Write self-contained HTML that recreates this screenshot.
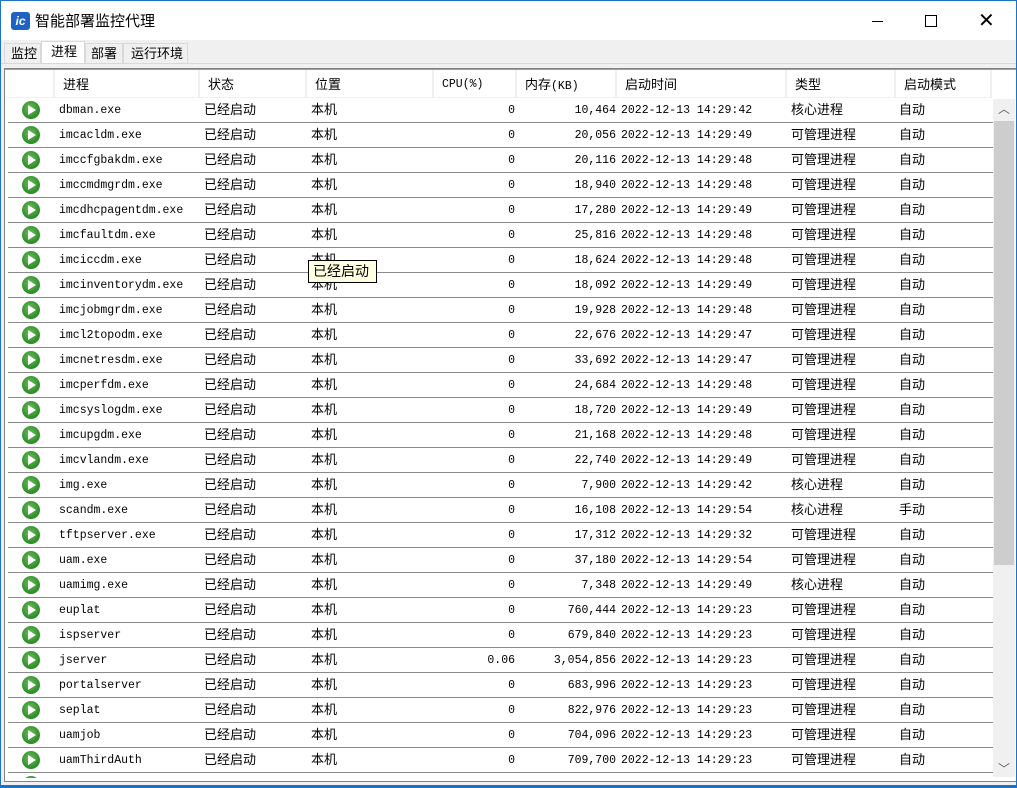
<!DOCTYPE html>
<html><head><meta charset="utf-8"><style>
*{margin:0;padding:0;box-sizing:border-box}
body{width:1017px;height:788px;position:relative;background:#fff;overflow:hidden;font-family:"Liberation Sans","Noto Sans CJK SC",sans-serif;font-size:13px;color:#000}
.a{position:absolute;white-space:nowrap}
.cj{font-family:"Noto Sans CJK SC",sans-serif;font-size:13px}
.m{font-family:"Liberation Mono","Noto Sans CJK SC",monospace;font-size:11.5px}
.r{position:absolute;left:8px;width:985px;height:25px;border-bottom:1px solid #8a8a8a}
.r span{position:absolute;top:2px;line-height:18px;white-space:nowrap}
.r span.m{top:4px}
.ic{position:absolute;left:14px;top:3px;width:18px;height:18px;border-radius:50%;background:radial-gradient(circle at 45% 40%,#6cbd5a,#2f8f2a 65%,#1f6d1c);}
.ic:after{content:"";position:absolute;left:6px;top:4px;border-left:8px solid #fff;border-top:5px solid transparent;border-bottom:5px solid transparent}
.h{position:absolute;top:70px;height:28px;border-right:2px solid #f0f0f0;line-height:28px;padding-left:8px}
</style></head><body>
<div class="a" style="left:0;top:0;width:1017px;height:1px;background:#1a73c8"></div>
<div class="a" style="left:0;top:0;width:1px;height:788px;background:#1a73c8"></div>
<div class="a" style="left:1016px;top:0;width:1px;height:788px;background:#1a73c8"></div>
<div class="a" style="left:11px;top:12px;width:19px;height:18px;background:#1e63c4;border-radius:3px;color:#fff;font-size:12px;font-weight:bold;font-style:italic;line-height:18px;text-align:center;font-family:'Liberation Sans'">ic</div>
<div class="a cj" style="left:35px;top:10px;font-size:15px;line-height:22px">智能部署监控代理</div>
<div class="a" style="left:872px;top:21px;width:11px;height:1px;background:#000"></div>
<div class="a" style="left:925px;top:15px;width:12px;height:12px;border:1px solid #000"></div>
<div class="a" style="left:978px;top:11px;font-size:20px;line-height:20px;font-weight:200">✕</div>
<div class="a" style="left:1px;top:40px;width:1015px;height:746px;background:#f0f0f0"></div>
<div class="a" style="left:4px;top:43px;width:37px;height:20px;border:1px solid #d9d9d9;border-bottom:none"></div>
<div class="a cj" style="left:11px;top:44px;line-height:18px">监控</div>
<div class="a" style="left:41px;top:41px;width:44px;height:23px;background:#fff;border:1px solid #d9d9d9;border-bottom:none"></div>
<div class="a cj" style="left:51px;top:42px;line-height:18px">进程</div>
<div class="a" style="left:85px;top:43px;width:38px;height:20px;border:1px solid #d9d9d9;border-bottom:none"></div>
<div class="a cj" style="left:91px;top:44px;line-height:18px">部署</div>
<div class="a" style="left:123px;top:43px;width:65px;height:20px;border:1px solid #d9d9d9;border-bottom:none"></div>
<div class="a cj" style="left:131px;top:44px;line-height:18px">运行环境</div>
<div class="a" style="left:1px;top:63px;width:1015px;height:1px;background:#d9d9d9"></div>
<div class="a" style="left:4px;top:68px;width:1012px;height:714px;background:#fff;border:1px solid #828282;border-right:none"></div>
<div class="a" style="left:5px;top:69px;width:1011px;height:1px;background:#a0a0a0"></div>
<div class="h" style="left:6px;width:49px"></div>
<div class="h cj" style="left:55px;width:145px;line-height:27px">进程</div>
<div class="h cj" style="left:200px;width:107px;line-height:27px">状态</div>
<div class="h cj" style="left:307px;width:127px;line-height:27px">位置</div>
<div class="h m" style="left:434px;width:83px;padding-top:1px">CPU(%)</div>
<div class="h cj" style="left:517px;width:100px;line-height:27px">内存<span class="m">(KB)</span></div>
<div class="h cj" style="left:617px;width:170px;line-height:27px">启动时间</div>
<div class="h cj" style="left:787px;width:109px;line-height:27px">类型</div>
<div class="h cj" style="left:896px;width:96px;line-height:27px">启动模式</div>
<div class="a" style="left:6px;top:97px;width:986px;height:1px;background:#f0f0f0"></div>
<div class="a" style="left:993px;top:99px;width:22px;height:678px;background:#f0f0f0"></div>
<div class="a" style="left:994px;top:121px;width:20px;height:444px;background:#cdcdcd"></div>
<div class="a" style="left:998px;top:100px;color:#606060;font-size:12px">︿</div>
<div class="a" style="left:998px;top:760px;color:#606060;font-size:12px">﹀</div>
<div class="a" style="left:8px;top:98px;width:985px;height:680px;overflow:hidden">
<div id="rows" style="position:relative;top:-98px"></div>
</div>
<div class="a" style="left:0;top:785px;width:1017px;height:3px;background:#1a73c8"></div>
<div class="a cj" style="left:308px;top:260px;width:69px;height:23px;background:#ffffe1;border:1px solid #000;line-height:21px;padding-left:4px;font-size:14px">已经启动</div>
<script>
var d=[["dbman.exe","0","10,464","42","核心进程","自动"],["imcacldm.exe","0","20,056","49","可管理进程","自动"],["imccfgbakdm.exe","0","20,116","48","可管理进程","自动"],["imccmdmgrdm.exe","0","18,940","48","可管理进程","自动"],["imcdhcpagentdm.exe","0","17,280","49","可管理进程","自动"],["imcfaultdm.exe","0","25,816","48","可管理进程","自动"],["imciccdm.exe","0","18,624","48","可管理进程","自动"],["imcinventorydm.exe","0","18,092","49","可管理进程","自动"],["imcjobmgrdm.exe","0","19,928","48","可管理进程","自动"],["imcl2topodm.exe","0","22,676","47","可管理进程","自动"],["imcnetresdm.exe","0","33,692","47","可管理进程","自动"],["imcperfdm.exe","0","24,684","48","可管理进程","自动"],["imcsyslogdm.exe","0","18,720","49","可管理进程","自动"],["imcupgdm.exe","0","21,168","48","可管理进程","自动"],["imcvlandm.exe","0","22,740","49","可管理进程","自动"],["img.exe","0","7,900","42","核心进程","自动"],["scandm.exe","0","16,108","54","核心进程","手动"],["tftpserver.exe","0","17,312","32","可管理进程","自动"],["uam.exe","0","37,180","54","可管理进程","自动"],["uamimg.exe","0","7,348","49","核心进程","自动"],["euplat","0","760,444","23","可管理进程","自动"],["ispserver","0","679,840","23","可管理进程","自动"],["jserver","0.06","3,054,856","23","可管理进程","自动"],["portalserver","0","683,996","23","可管理进程","自动"],["seplat","0","822,976","23","可管理进程","自动"],["uamjob","0","704,096","23","可管理进程","自动"],["uamThirdAuth","0","709,700","23","可管理进程","自动"],["x","","","","",""]];
var h="";d.forEach(function(r,i){var t=98+25*i;h+='<div class="r" style="left:0;top:'+t+'px"><div class="ic"></div>'+(r[1]===""?"":'<span class="m" style="left:51px">'+r[0]+'</span><span class="cj" style="left:196px">已经启动</span><span class="cj" style="left:303px">本机</span><span class="m" style="right:478px">'+r[1]+'</span><span class="m" style="right:377px">'+r[2]+'</span><span class="m" style="left:613px">2022-12-13 14:29:'+r[3]+'</span><span class="cj" style="left:783px">'+r[4]+'</span><span class="cj" style="left:891px">'+r[5]+'</span>')+'</div>';});
document.getElementById("rows").innerHTML=h;
</script>
</body></html>
